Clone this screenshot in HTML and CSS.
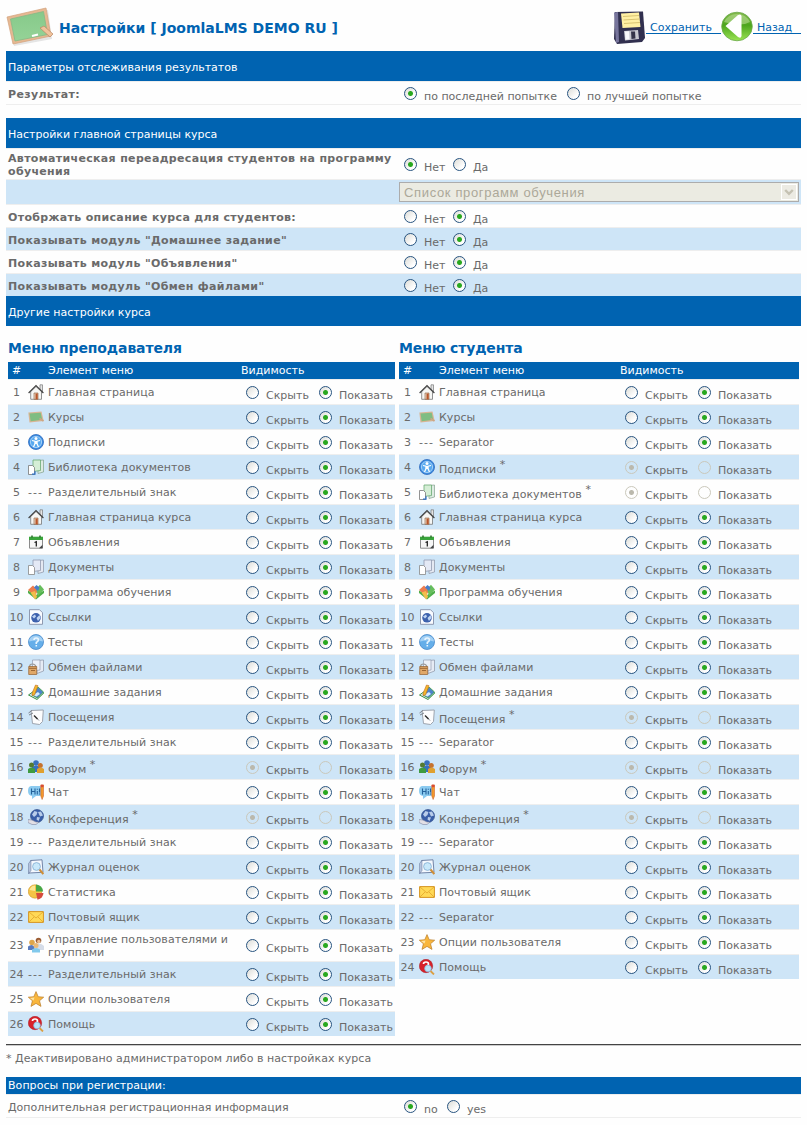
FILE: index.html
```html
<!DOCTYPE html>
<html lang="ru">
<head>
<meta charset="utf-8">
<title>Настройки</title>
<link rel="stylesheet" href="styles.css">
</head>
<body>
<svg class="sprite" aria-hidden="true">
<symbol id="home" viewBox="0 0 16 16"><path d="M12 .8h2.500v7h-2.500z" fill="#e4e4e4" stroke="#777" stroke-width=".7"/><path d="M2.700 7.500 8 2.500l5.500 5V15.300H2.700z" fill="#f6f6f4" stroke="#777" stroke-width=".8"/><path d="M.6 9 8 1.500 15.400 9" fill="none" stroke="#444" stroke-width="1.200"/><path d="M6 9h4v6.300H6z" fill="#e9d4c2" stroke="#8b5a38" stroke-width=".6"/><path d="M7.500 9.500H9.700v5.800H7.500z" fill="#b9562a"/></symbol>
<symbol id="board" viewBox="0 0 16 16"><path d="M.3 3.500 13.500 2.500 15.700 12 1.500 13.500z" fill="#d9b593"/><path d="M1.500 4.500 12.700 3.700 14.200 10.800 2.700 12.200z" fill="#7fbd82"/><path d="M11.500 9.500l4 2.500" stroke="#cda584" stroke-width="1.700"/></symbol>
<symbol id="person" viewBox="0 0 16 16"><circle cx="8" cy="8" r="7.500" fill="#3f8fe2" stroke="#2c68bd" stroke-width=".8"/><circle cx="8" cy="8" r="5.600" fill="#58a9ef" stroke="#b9dcfa" stroke-width=".8"/><circle cx="8" cy="4.500" r="1.500" fill="#fff"/><path d="M4 6.500l3 .7L6.800 10 5.500 13M12 6.500l-3 .7.2 2.800L10.500 13M8 7v3" fill="none" stroke="#fff" stroke-width="1.200"/></symbol>
<symbol id="library" viewBox="0 0 16 16"><path d="M10 1.500 15.500 1v12L10 14.500z" fill="#ddebe2" stroke="#81a18c" stroke-width=".7"/><path d="M5 1h7.500v10.500L5 12.500z" fill="#d5eed6" stroke="#6aa973" stroke-width=".8"/><path d="M.5 6.500h4l2 2v7h-6z" fill="#fff" stroke="#777" stroke-width=".8"/><path d="M4 15.200h3v-3" fill="none" stroke="#2d70c4" stroke-width="1.200"/></symbol>
<symbol id="docs" viewBox="0 0 16 16"><path d="M10 1.500 15.500 1v12L10 14.500z" fill="#e5e9f2" stroke="#8b93a5" stroke-width=".7"/><path d="M5 1h7.500v10.500L5 12.500z" fill="#e4e9f5" stroke="#929bb0" stroke-width=".8"/><path d="M.5 6.500h4l2 2v7h-6z" fill="#fff" stroke="#888" stroke-width=".8"/></symbol>
<symbol id="calendar" viewBox="0 0 16 16"><path d="M1.500 4h13v10.200h-13z" fill="#f6f6f6" stroke="#8b8b8b"/><path d="M1 2.700h14V6H1z" fill="#39a43b"/><path d="M4 1.500v2M12 1.500v2" stroke="#286e2a" stroke-width="1.500"/><path d="M6.500 8.500 8.300 7.800V12.500" fill="none" stroke="#222" stroke-width="1.300"/><path d="M11 14.200l3.500-3.500v3.500z" fill="#444"/></symbol>
<symbol id="program" viewBox="0 0 16 16"><path d="M0 6.500 8 11l8-4.500V9l-8 6.500L0 9z" fill="#4fae4a"/><path d="M0 6 5 1.500 10 6.500 7 12z" fill="#ed7d4d"/><path d="M2.500 8.500 7 7l2 6-2 2.500z" fill="#f3bd4b"/><path d="M8 5 12 .8 16 5.500 10 12z" fill="#66be5c"/><path d="M6 3.500 8.500 1l3 2.500L10 7z" fill="#467dc9"/></symbol>
<symbol id="links" viewBox="0 0 16 16"><path d="M1.500.7h10l3 3v11.600h-13z" fill="#f9fbff" stroke="#8490a8" stroke-width=".9"/><circle cx="8" cy="8.800" r="4.800" fill="#3d61ad"/><path d="M4 7.500 7 5.500l1 2-2 2zM8.500 9 11.500 6l1 3-2.500 3z" fill="#bfd4f3"/></symbol>
<symbol id="question" viewBox="0 0 16 16"><circle cx="8" cy="8" r="7.500" fill="#65aee9" stroke="#4889ca" stroke-width=".8"/><path d="M1 7.500a7 6 0 0 1 14 0q-7-2-14 0" fill="#a3d0f4"/><path d="M6 6q0-2 2.200-2t2.200 1.800Q10.400 7.500 8.300 8.400V10M8.300 11v1.500" fill="none" stroke="#e9f6ff" stroke-width="1.600"/></symbol>
<symbol id="exchange" viewBox="0 0 16 16"><path d="M9 1.500 15.500 1v11L9 14.500z" fill="#e6ebf4" stroke="#8b93a5" stroke-width=".7"/><path d="M4.500 1H12v10l-7.500 1z" fill="#edf1f9" stroke="#929bb0" stroke-width=".7"/><path d="M1.500 8Q1.500 5 4.500 5T8 8" fill="none" stroke="#999" stroke-width="1.200"/><path d="M.7 7.500h8v8h-8z" fill="#e0a868" stroke="#95602e" stroke-width=".7"/><path d="M1 9.300h7.500M3 11.500h4" stroke="#95602e" stroke-width=".9"/></symbol>
<symbol id="homework" viewBox="0 0 16 16"><path d="M.5 11 8 5.500 15.800 9 9 15.500z" fill="#dce8f5" stroke="#3c9145" stroke-width="1"/><path d="M4 11 10 3l5.500 5-6 6z" fill="#4d83ca" stroke="#47a14b" stroke-width=".9"/><path d="M5 11l5-3 2 2-3.500 2.500z" fill="#d6edff"/><path d="M7.500 1 10 1.700 6.500 11 4 11.500 4.200 9z" fill="#f5b72b" stroke="#bf6c20" stroke-width=".6"/></symbol>
<symbol id="visits" viewBox="0 0 16 16"><path d="M3 1.500 15.300 1l-.8 11.500-3 3-7-1z" fill="#fcfcfd" stroke="#969ca6" stroke-width=".9"/><path d="M.5 4 4 1.500M1 6l4-2M6.500 7 11 11.500" stroke="#7d838c"/><path d="M6 6.500 9.500 10" stroke="#333" stroke-width="1.400"/></symbol>
<symbol id="forum" viewBox="0 0 16 16"><circle cx="8" cy="4" r="2.800" fill="#3970bd"/><path d="M4 13V8q4-3 8 0v5z" fill="#3570c1"/><circle cx="3.500" cy="6" r="2.500" fill="#557a30"/><path d="M0 14v-4q3.500-3 7 0v4z" fill="#3f9b3f"/><circle cx="12.300" cy="6.500" r="2.500" fill="#c5722e"/><path d="M9 14v-4q3.500-3 7 0v4z" fill="#e0a02f"/></symbol>
<symbol id="chat" viewBox="0 0 16 16"><path d="M3 2h9q3 1.500 3 5t-3 5H8l-4 3v-3Q0 11.500 0 7t3-5" fill="#8ccbf0"/><path d="M3.500 4.500v6M7 4.500v6M3.500 7.500H7M9.300 7v3.500M9.300 4.700v1M11.500 4.500v4M11.500 9.500v1" stroke="#24629b" stroke-width="1.100"/><path d="M12.800 1h2.700v11l-1.400 3.500-1.300-3.500z" fill="#f39a2c" stroke="#c7541c" stroke-width=".5"/><path d="M12.800.7h2.700v2.500h-2.700z" fill="#d94a35"/></symbol>
<symbol id="conference" viewBox="0 0 16 16"><circle cx="9" cy="7" r="6.500" fill="#3a5fa8" stroke="#27427f" stroke-width=".6"/><path d="M4 5.500 6.500 2l3 1-1 3-2.500 2zM10 3l3-.5 2 4-3 1zM9 8l3 .5-1.500 3.500-2-1.500z" fill="#b9cdea"/><path d="M0 10.500l4 .5 4 2h3l-3 2.500H4l-4-2z" fill="#e2dfe5" stroke="#7d86a5" stroke-width=".6"/></symbol>
<symbol id="journal" viewBox="0 0 16 16"><path d="M2.500 1.500 14 .8l1 12.500L1 14z" fill="#f4f8fe" stroke="#66789d" stroke-width=".9"/><path d="M.5 4.500 3 1.500v10L.5 15z" fill="#b4c2dc" stroke="#66789d" stroke-width=".5"/><circle cx="8.500" cy="7.500" r="3.900" fill="#c8e8fa" stroke="#82acd0" stroke-width=".8"/><path d="M11.500 10.500 15.300 15" stroke="#ce8e37" stroke-width="2"/></symbol>
<symbol id="stats" viewBox="0 0 16 16"><circle cx="7" cy="7.500" r="6.700" fill="#f4c445" stroke="#cc9527" stroke-width=".6"/><path d="M8 7.500V.5q6.500.5 7 7z" fill="#48a745"/><path d="M8 9h7.500q-.5 5.500-6 6.700z" fill="#d64b3d"/><path d="M1.500 6Q3 1.500 7 1.500V7z" fill="#fbe795"/></symbol>
<symbol id="mail" viewBox="0 0 16 16"><path d="M.6 2.600h14.800v10.800H.6z" fill="#ffd957" stroke="#d69422"/><path d="M1 3l7 6 7-6M1 13l5-5M15 13l-5-5" fill="none" stroke="#e5aa2e" stroke-width=".9"/></symbol>
<symbol id="users" viewBox="0 0 16 16"><circle cx="10.500" cy="3.500" r="2.800" fill="#9a5c34"/><circle cx="10.800" cy="4.500" r="1.700" fill="#eebd8f"/><path d="M8 8q4-3 8 1v4H8z" fill="#d5dce8"/><circle cx="4" cy="5.500" r="2.800" fill="#dea64c"/><path d="M0 13V9.500q3.500-3 6.500 0V13z" fill="#597bbf"/><circle cx="8" cy="8.500" r="2.500" fill="#eab977"/><path d="M4 15.500v-3q4-3 8 0v3z" fill="#82c9ec"/></symbol>
<symbol id="star" viewBox="0 0 16 16"><path d="M8 .6 10.200 5.700 15.700 6.200 11.500 9.800 13 15.400 8 12.400 3 15.400 4.400 9.800.3 6.200 5.800 5.700z" fill="#f9b63c" stroke="#b97c2b" stroke-width=".7"/><path d="M8 2 6.500 6.500 2 7l3.500 2.500z" fill="#fde3a1"/></symbol>
<symbol id="help" viewBox="0 0 16 16"><circle cx="7" cy="7" r="6.700" fill="#d7222a" stroke="#a71720" stroke-width=".5"/><path d="M4.500 5q0-2 2.500-2t2.500 2T7 7.800V9" fill="none" stroke="#fff" stroke-width="1.700"/><circle cx="9" cy="9.500" r="3.300" fill="#b9e3f8" stroke="#8cb8d9" stroke-width=".8"/><path d="M11.500 12l3.500 3.500" stroke="#dba044" stroke-width="1.800"/></symbol>
</svg>
<main class="page">
<header class="top">
<svg class="logo" viewBox="0 0 48 40"><defs><linearGradient id="chalk" x2="0" y2="1"><stop stop-color="#86c98a"/><stop offset="1" stop-color="#95d397"/></linearGradient></defs><path d="M3 13 42 3l4 29L8 39z" fill="#ccc" opacity=".5"/><path d="M1 10 40 1l5 28L7 37z" fill="#e6b892" stroke="#d3a27d" stroke-width=".7"/><path d="M4.500 12 37.500 4.500 41.500 27.500 9 34z" fill="url(#chalk)" stroke="#86b987" stroke-width=".8"/><path d="M26 29l6-1.500" stroke="#fff" stroke-width="2"/><path d="M34 21l4-2 9 8-3 3z" fill="#f0c39c" stroke="#ba8663" stroke-width=".7"/></svg>
<h1>Настройки [ JoomlaLMS DEMO RU ]</h1>
<nav class="actions">
<a href="#" class="save"><svg viewBox="0 0 33 33"><path d="M2 1 30 .5 32 27 29 31 4 33 1 28z" fill="#31304f"/><path d="M1 1.500 5 1 6 31 3 32z" fill="#77759c"/><path d="M8 2.500 26 1.500 27.500 16 9.500 17z" fill="#fff0a4"/><path d="M10 5.500l16-1M10.500 9l16-1M11 12.500l16-1" stroke="#cfb965" stroke-width=".8"/><path d="M11 20 25 19l1 9-14 1.500z" fill="#c8c9d0"/><path d="M18 20.500h4l.5 7-4 .5z" fill="#333348"/><path d="M12 20.500l4-.2.5 8-4 .5z" fill="#f8f8fa"/></svg><span>Сохранить</span></a>
<a href="#" class="back"><svg viewBox="0 0 32 32"><defs><linearGradient id="leaf" x2="0" y2="1"><stop stop-color="#86ba4d"/><stop offset=".45" stop-color="#4ca51c"/><stop offset="1" stop-color="#9be353"/></linearGradient></defs><ellipse cx="16" cy="15.500" rx="15.300" ry="14.300" fill="url(#leaf)" stroke="#69a84a" stroke-width=".8"/><path d="M3 11Q7 3 16 3t13 8q-9 5-26 0" fill="#b8dc93" opacity=".6"/><path d="M4.500 15 17 4q3-1.500 3.500 1v20q-.5 3-3.500 1z" fill="#fff"/></svg><span>Назад</span></a>
</nav>
</header>

<h2 class="band">Параметры отслеживания результатов</h2>
<section class="settings first">
<div class="setting"><b>Результат:</b><div class="opts attempt"><label><input type="radio" name="r" checked>по последней попытке</label><label><input type="radio" name="r">по лучшей попытке</label></div></div>
</section>

<h2 class="band">Настройки главной страницы курса</h2>
<section class="settings">
<div class="setting tall"><b>Автоматическая переадресация студентов на программу<br>обучения</b><div class="opts"><label><input type="radio" name="a" checked>Нет</label><label><input type="radio" name="a">Да</label></div></div>
<div class="setting choose"><b></b><div class="select"><span>Список программ обучения</span><i><svg viewBox="0 0 14 15"><path d="M3.200 5 7 8.800 10.800 5" fill="none" stroke="#c5c2b3" stroke-width="2.400"/></svg></i></div></div>
<div class="setting"><b>Отобржать описание курса для студентов:</b><div class="opts"><label><input type="radio" name="b">Нет</label><label><input type="radio" name="b" checked>Да</label></div></div>
<div class="setting"><b>Показывать модуль "Домашнее задание"</b><div class="opts"><label><input type="radio" name="c">Нет</label><label><input type="radio" name="c" checked>Да</label></div></div>
<div class="setting"><b>Показывать модуль "Объявления"</b><div class="opts"><label><input type="radio" name="d">Нет</label><label><input type="radio" name="d" checked>Да</label></div></div>
<div class="setting"><b>Показывать модуль "Обмен файлами"</b><div class="opts"><label><input type="radio" name="e">Нет</label><label><input type="radio" name="e" checked>Да</label></div></div>
</section>
<h2 class="band">Другие настройки курса</h2>

<div class="menus">
<section class="menu teacher">
<h3>Меню преподавателя</h3>
<div class="head"><span>#</span><span></span><span>Элемент меню</span><span>Видимость</span></div>
<div class="row"><span>1</span><svg><use href="#home"/></svg><p>Главная страница</p><div class="vis"><label><input type="radio" name="t1">Скрыть</label><label><input type="radio" name="t1" checked>Показать</label></div></div>
<div class="row"><span>2</span><svg><use href="#board"/></svg><p>Курсы</p><div class="vis"><label><input type="radio" name="t2">Скрыть</label><label><input type="radio" name="t2" checked>Показать</label></div></div>
<div class="row"><span>3</span><svg><use href="#person"/></svg><p>Подписки</p><div class="vis"><label><input type="radio" name="t3">Скрыть</label><label><input type="radio" name="t3" checked>Показать</label></div></div>
<div class="row"><span>4</span><svg><use href="#library"/></svg><p>Библиотека документов</p><div class="vis"><label><input type="radio" name="t4">Скрыть</label><label><input type="radio" name="t4" checked>Показать</label></div></div>
<div class="row"><span>5</span><em>---</em><p>Разделительный знак</p><div class="vis"><label><input type="radio" name="t5">Скрыть</label><label><input type="radio" name="t5" checked>Показать</label></div></div>
<div class="row"><span>6</span><svg><use href="#home"/></svg><p>Главная страница курса</p><div class="vis"><label><input type="radio" name="t6">Скрыть</label><label><input type="radio" name="t6" checked>Показать</label></div></div>
<div class="row"><span>7</span><svg><use href="#calendar"/></svg><p>Объявления</p><div class="vis"><label><input type="radio" name="t7">Скрыть</label><label><input type="radio" name="t7" checked>Показать</label></div></div>
<div class="row"><span>8</span><svg><use href="#docs"/></svg><p>Документы</p><div class="vis"><label><input type="radio" name="t8">Скрыть</label><label><input type="radio" name="t8" checked>Показать</label></div></div>
<div class="row"><span>9</span><svg><use href="#program"/></svg><p>Программа обучения</p><div class="vis"><label><input type="radio" name="t9">Скрыть</label><label><input type="radio" name="t9" checked>Показать</label></div></div>
<div class="row"><span>10</span><svg><use href="#links"/></svg><p>Ссылки</p><div class="vis"><label><input type="radio" name="t10">Скрыть</label><label><input type="radio" name="t10" checked>Показать</label></div></div>
<div class="row"><span>11</span><svg><use href="#question"/></svg><p>Тесты</p><div class="vis"><label><input type="radio" name="t11">Скрыть</label><label><input type="radio" name="t11" checked>Показать</label></div></div>
<div class="row"><span>12</span><svg><use href="#exchange"/></svg><p>Обмен файлами</p><div class="vis"><label><input type="radio" name="t12">Скрыть</label><label><input type="radio" name="t12" checked>Показать</label></div></div>
<div class="row"><span>13</span><svg><use href="#homework"/></svg><p>Домашние задания</p><div class="vis"><label><input type="radio" name="t13">Скрыть</label><label><input type="radio" name="t13" checked>Показать</label></div></div>
<div class="row"><span>14</span><svg><use href="#visits"/></svg><p>Посещения</p><div class="vis"><label><input type="radio" name="t14">Скрыть</label><label><input type="radio" name="t14" checked>Показать</label></div></div>
<div class="row"><span>15</span><em>---</em><p>Разделительный знак</p><div class="vis"><label><input type="radio" name="t15">Скрыть</label><label><input type="radio" name="t15" checked>Показать</label></div></div>
<div class="row off"><span>16</span><svg><use href="#forum"/></svg><p>Форум <sup>*</sup></p><div class="vis"><label><input type="radio" name="t16" checked disabled>Скрыть</label><label><input type="radio" name="t16" disabled>Показать</label></div></div>
<div class="row"><span>17</span><svg><use href="#chat"/></svg><p>Чат</p><div class="vis"><label><input type="radio" name="t17">Скрыть</label><label><input type="radio" name="t17" checked>Показать</label></div></div>
<div class="row off"><span>18</span><svg><use href="#conference"/></svg><p>Конференция <sup>*</sup></p><div class="vis"><label><input type="radio" name="t18" checked disabled>Скрыть</label><label><input type="radio" name="t18" disabled>Показать</label></div></div>
<div class="row"><span>19</span><em>---</em><p>Разделительный знак</p><div class="vis"><label><input type="radio" name="t19">Скрыть</label><label><input type="radio" name="t19" checked>Показать</label></div></div>
<div class="row"><span>20</span><svg><use href="#journal"/></svg><p>Журнал оценок</p><div class="vis"><label><input type="radio" name="t20">Скрыть</label><label><input type="radio" name="t20" checked>Показать</label></div></div>
<div class="row"><span>21</span><svg><use href="#stats"/></svg><p>Статистика</p><div class="vis"><label><input type="radio" name="t21">Скрыть</label><label><input type="radio" name="t21" checked>Показать</label></div></div>
<div class="row"><span>22</span><svg><use href="#mail"/></svg><p>Почтовый ящик</p><div class="vis"><label><input type="radio" name="t22">Скрыть</label><label><input type="radio" name="t22" checked>Показать</label></div></div>
<div class="row double"><span>23</span><svg><use href="#users"/></svg><p>Управление пользователями и<br>группами</p><div class="vis"><label><input type="radio" name="t23">Скрыть</label><label><input type="radio" name="t23" checked>Показать</label></div></div>
<div class="row"><span>24</span><em>---</em><p>Разделительный знак</p><div class="vis"><label><input type="radio" name="t24">Скрыть</label><label><input type="radio" name="t24" checked>Показать</label></div></div>
<div class="row"><span>25</span><svg><use href="#star"/></svg><p>Опции пользователя</p><div class="vis"><label><input type="radio" name="t25">Скрыть</label><label><input type="radio" name="t25" checked>Показать</label></div></div>
<div class="row"><span>26</span><svg><use href="#help"/></svg><p>Помощь</p><div class="vis"><label><input type="radio" name="t26">Скрыть</label><label><input type="radio" name="t26" checked>Показать</label></div></div>
</section>
<section class="menu student">
<h3>Меню студента</h3>
<div class="head"><span>#</span><span></span><span>Элемент меню</span><span>Видимость</span></div>
<div class="row"><span>1</span><svg><use href="#home"/></svg><p>Главная страница</p><div class="vis"><label><input type="radio" name="s1">Скрыть</label><label><input type="radio" name="s1" checked>Показать</label></div></div>
<div class="row"><span>2</span><svg><use href="#board"/></svg><p>Курсы</p><div class="vis"><label><input type="radio" name="s2">Скрыть</label><label><input type="radio" name="s2" checked>Показать</label></div></div>
<div class="row"><span>3</span><em>---</em><p>Separator</p><div class="vis"><label><input type="radio" name="s3">Скрыть</label><label><input type="radio" name="s3" checked>Показать</label></div></div>
<div class="row off"><span>4</span><svg><use href="#person"/></svg><p>Подписки <sup>*</sup></p><div class="vis"><label><input type="radio" name="s4" checked disabled>Скрыть</label><label><input type="radio" name="s4" disabled>Показать</label></div></div>
<div class="row off"><span>5</span><svg><use href="#library"/></svg><p>Библиотека документов <sup>*</sup></p><div class="vis"><label><input type="radio" name="s5" checked disabled>Скрыть</label><label><input type="radio" name="s5" disabled>Показать</label></div></div>
<div class="row"><span>6</span><svg><use href="#home"/></svg><p>Главная страница курса</p><div class="vis"><label><input type="radio" name="s6">Скрыть</label><label><input type="radio" name="s6" checked>Показать</label></div></div>
<div class="row"><span>7</span><svg><use href="#calendar"/></svg><p>Объявления</p><div class="vis"><label><input type="radio" name="s7">Скрыть</label><label><input type="radio" name="s7" checked>Показать</label></div></div>
<div class="row"><span>8</span><svg><use href="#docs"/></svg><p>Документы</p><div class="vis"><label><input type="radio" name="s8">Скрыть</label><label><input type="radio" name="s8" checked>Показать</label></div></div>
<div class="row"><span>9</span><svg><use href="#program"/></svg><p>Программа обучения</p><div class="vis"><label><input type="radio" name="s9">Скрыть</label><label><input type="radio" name="s9" checked>Показать</label></div></div>
<div class="row"><span>10</span><svg><use href="#links"/></svg><p>Ссылки</p><div class="vis"><label><input type="radio" name="s10">Скрыть</label><label><input type="radio" name="s10" checked>Показать</label></div></div>
<div class="row"><span>11</span><svg><use href="#question"/></svg><p>Тесты</p><div class="vis"><label><input type="radio" name="s11">Скрыть</label><label><input type="radio" name="s11" checked>Показать</label></div></div>
<div class="row"><span>12</span><svg><use href="#exchange"/></svg><p>Обмен файлами</p><div class="vis"><label><input type="radio" name="s12">Скрыть</label><label><input type="radio" name="s12" checked>Показать</label></div></div>
<div class="row"><span>13</span><svg><use href="#homework"/></svg><p>Домашние задания</p><div class="vis"><label><input type="radio" name="s13">Скрыть</label><label><input type="radio" name="s13" checked>Показать</label></div></div>
<div class="row off"><span>14</span><svg><use href="#visits"/></svg><p>Посещения <sup>*</sup></p><div class="vis"><label><input type="radio" name="s14" checked disabled>Скрыть</label><label><input type="radio" name="s14" disabled>Показать</label></div></div>
<div class="row"><span>15</span><em>---</em><p>Separator</p><div class="vis"><label><input type="radio" name="s15">Скрыть</label><label><input type="radio" name="s15" checked>Показать</label></div></div>
<div class="row off"><span>16</span><svg><use href="#forum"/></svg><p>Форум <sup>*</sup></p><div class="vis"><label><input type="radio" name="s16" checked disabled>Скрыть</label><label><input type="radio" name="s16" disabled>Показать</label></div></div>
<div class="row"><span>17</span><svg><use href="#chat"/></svg><p>Чат</p><div class="vis"><label><input type="radio" name="s17">Скрыть</label><label><input type="radio" name="s17" checked>Показать</label></div></div>
<div class="row off"><span>18</span><svg><use href="#conference"/></svg><p>Конференция <sup>*</sup></p><div class="vis"><label><input type="radio" name="s18" checked disabled>Скрыть</label><label><input type="radio" name="s18" disabled>Показать</label></div></div>
<div class="row"><span>19</span><em>---</em><p>Separator</p><div class="vis"><label><input type="radio" name="s19">Скрыть</label><label><input type="radio" name="s19" checked>Показать</label></div></div>
<div class="row"><span>20</span><svg><use href="#journal"/></svg><p>Журнал оценок</p><div class="vis"><label><input type="radio" name="s20">Скрыть</label><label><input type="radio" name="s20" checked>Показать</label></div></div>
<div class="row"><span>21</span><svg><use href="#mail"/></svg><p>Почтовый ящик</p><div class="vis"><label><input type="radio" name="s21">Скрыть</label><label><input type="radio" name="s21" checked>Показать</label></div></div>
<div class="row"><span>22</span><em>---</em><p>Separator</p><div class="vis"><label><input type="radio" name="s22">Скрыть</label><label><input type="radio" name="s22" checked>Показать</label></div></div>
<div class="row"><span>23</span><svg><use href="#star"/></svg><p>Опции пользователя</p><div class="vis"><label><input type="radio" name="s23">Скрыть</label><label><input type="radio" name="s23" checked>Показать</label></div></div>
<div class="row"><span>24</span><svg><use href="#help"/></svg><p>Помощь</p><div class="vis"><label><input type="radio" name="s24">Скрыть</label><label><input type="radio" name="s24" checked>Показать</label></div></div>
</section>
</div>

<p class="note">* Деактивировано администратором либо в настройках курса</p>
<h2 class="band thin">Вопросы при регистрации:</h2>
<section class="settings last">
<div class="setting"><span>Дополнительная регистрационная информация</span><div class="opts answer"><label><input type="radio" name="q" checked>no</label><label><input type="radio" name="q">yes</label></div></div>
</section>
</main>
</body>
</html>
```
FILE: styles.css
```css
* { box-sizing: border-box; }
body { margin: 0; background: #fefefe; color: #6a6a6a; font: 11px/13px "DejaVu Sans", Verdana, sans-serif; }
h1, h2, h3, p { margin: 0; }
.sprite { display: none; }
.page { width: 795px; margin-left: 6px; }

.top { display: flex; height: 51px; }
.logo { width: 48px; height: 40px; margin-top: 7px; }
h1 { margin: 19px 0 0 5px; font-size: 14px; line-height: 18px; color: #0063b1; white-space: nowrap; }
.actions { display: flex; margin-left: auto; padding-top: 11px; }
.actions a { display: flex; color: #0063b1; text-decoration: none; }
.actions span { height: 15px; margin-top: 8px; padding: 3px 0 0 4px; line-height: 12px; border-bottom: 1px solid #0063b1; }
.save svg { width: 33px; height: 33px; }
.save span { width: 75px; }
.back svg { width: 32px; height: 32px; }
.back span { width: 48px; }

.band { height: 30px; padding: 2px 2px 0; background: #0063b1; color: #fff; font-size: 11px; font-weight: normal; line-height: 29px; }
.band.thin { height: 17px; padding-top: 0; line-height: 18px; letter-spacing: .05px; }

.settings.first { height: 37px; }
.setting { display: grid; grid-template-columns: 393px 1fr; height: 23px; border-top: 1px solid #eee; }
.setting > b, .setting > span { padding: 6px 0 0 2px; white-space: nowrap; }
.setting > b { letter-spacing: .33px; }
.setting:nth-child(even) { background: #cee5f7; }
.first .setting, .last .setting { height: 24px; border-bottom: 1px solid #eee; }
.setting.tall { height: 31px; }
.tall > b { padding-top: 3px; }
.setting.choose { height: 25px; }
.opts { display: flex; padding: 5px 0 0 5px; }
.tall .opts { padding-top: 9px; }
label { display: flex; width: 49px; padding-top: 3px; white-space: nowrap; }
.attempt label { width: 163px; }
.answer label { width: 43px; }

input { appearance: none; flex: none; width: 13px; height: 13px; margin: -3px 7px 0 0; border: 1px solid #285480; border-radius: 50%; background: linear-gradient(135deg, #dcdcd7, #fff 75%); }
input:checked { background: radial-gradient(circle, #29a81f 0 2px, transparent 3px), linear-gradient(135deg, #dcdcd7, #fff 75%); }
input:disabled { border-color: #cac8bb; background: transparent; }
input:disabled:checked { background: radial-gradient(circle, #bbb9ad 0 2px, transparent 3px); }

.select { display: flex; justify-content: space-between; width: 400px; height: 20px; margin-top: 2px; padding: 1px; border: 1px solid #acacac; background: #ebebe2; color: #aca899; font: 13px/17px "Liberation Sans", Arial, sans-serif; }
.select span { padding-left: 3px; letter-spacing: .65px; }
.select i { width: 16px; height: 16px; border: 1px solid #fff; background: #ecebe3; }
.select svg { display: block; width: 14px; height: 15px; }

.menus { display: flex; gap: 4px; padding: 13px 2px 0; height: 718px; }
.menu h3 { height: 23px; font-size: 14px; line-height: 18px; color: #0063b1; letter-spacing: -.12px; }
.teacher { width: 387px; }
.student { width: 400px; }
.head, .row { display: grid; grid-template-columns: 17px 23px 193px 1fr; }
.student .head, .student .row { grid-template-columns: 17px 23px 181px 1fr; }
.head { height: 17px; background: #0063b1; color: #fff; line-height: 18px; }
.head span:first-child, .row > span { text-align: center; }
.row { height: 25px; padding-top: 6px; border-top: 1px solid #eee; align-items: start; }
.row:nth-child(even) { background: #cee5f7; }
.row svg { width: 16px; height: 16px; margin: -2px 0 0 3px; }
.row em { padding-left: 3px; font-style: normal; letter-spacing: 1px; }
.row p { white-space: nowrap; letter-spacing: .05px; }
.vis { display: flex; padding-left: 5px; }
.vis label { width: 73px; }
.off p { padding-top: 2px; }
sup { font-size: 11px; line-height: 0; vertical-align: 5px; }
.row.double { height: 32px; padding-top: 9px; }
.double p { margin-top: -6px; }

.note { height: 33px; padding-top: 7px; border-top: 1px solid #444; box-shadow: inset 0 1px #ccc; letter-spacing: .04px; }
```
